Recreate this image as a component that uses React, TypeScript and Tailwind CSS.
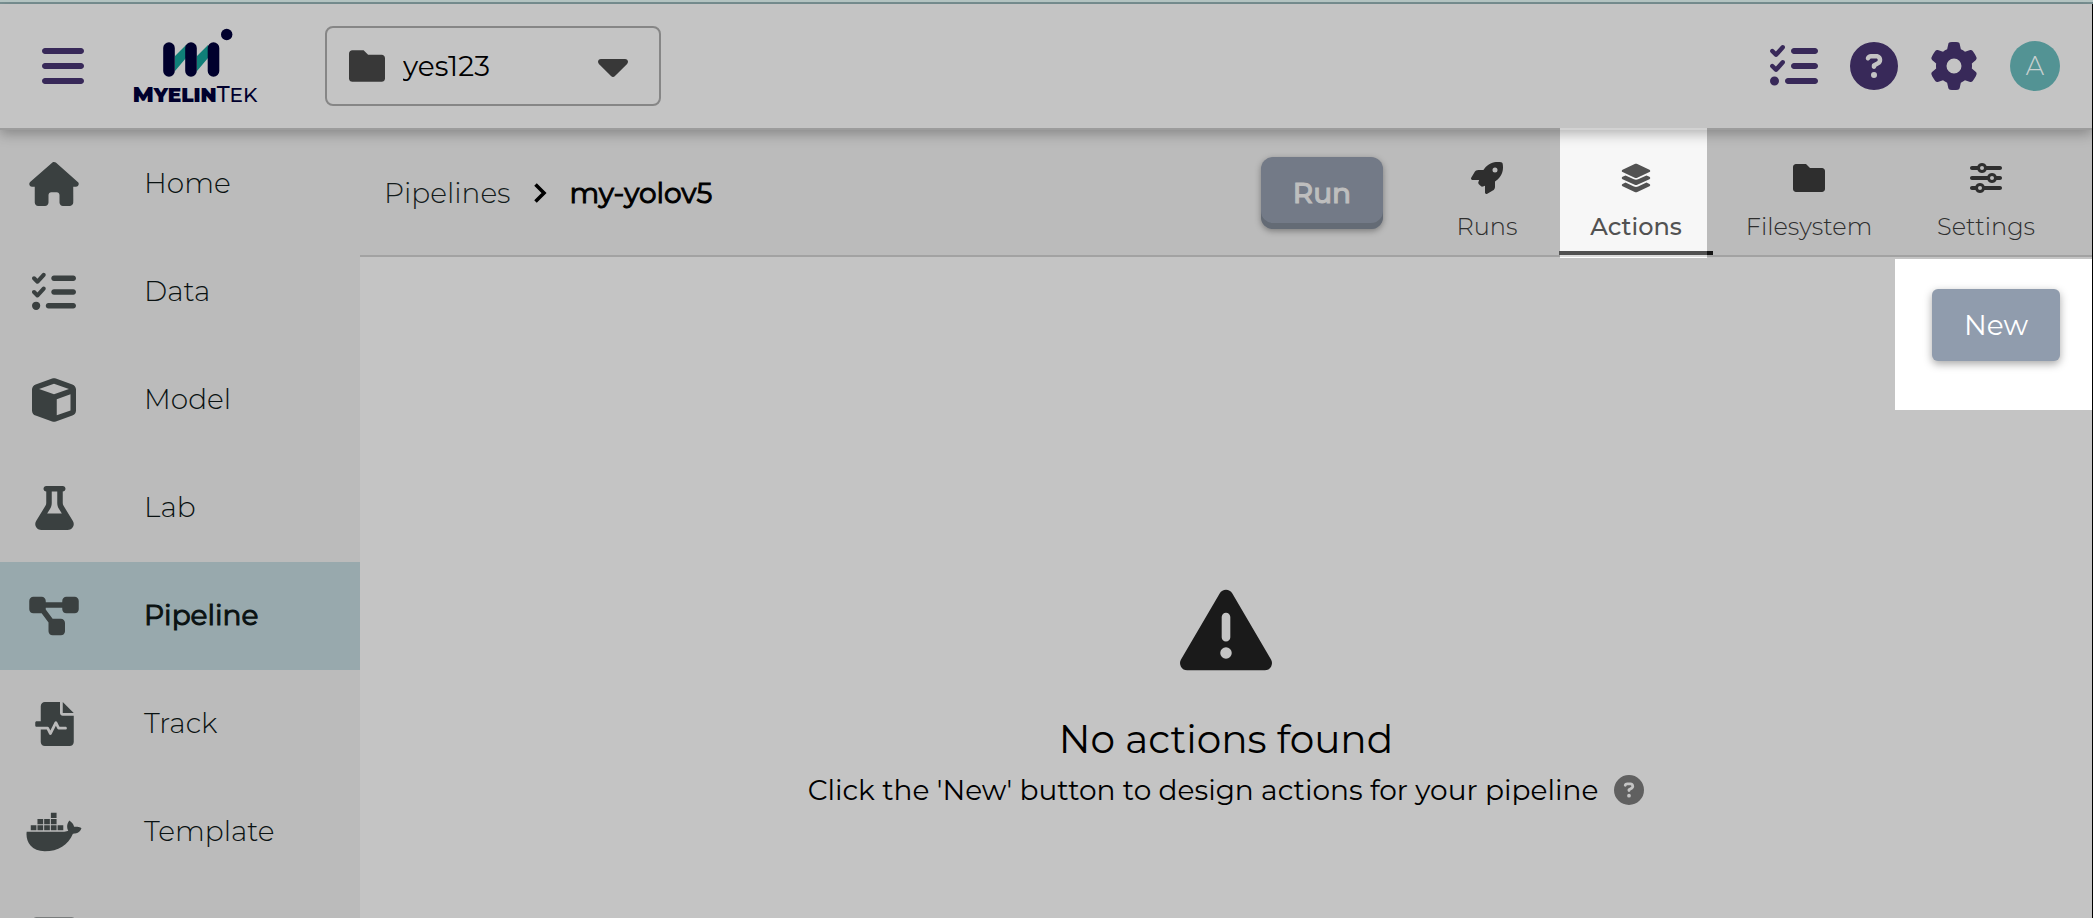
import type { ComponentType, ReactNode } from "react";
import {
  FaBars,
  FaCircleQuestion,
  FaCube,
  FaDiagramProject,
  FaDocker,
  FaFlask,
  FaGear,
  FaHouse,
  FaLayerGroup,
  FaListCheck,
  FaRocket,
  FaSliders,
  FaTriangleExclamation,
} from "react-icons/fa6";

type IconProps = { className?: string };
type Icon = ComponentType<IconProps>;

function FolderIcon({ className }: IconProps) {
  return (
    <svg viewBox="0 0 512 512" fill="currentColor" className={className} aria-hidden="true">
      <path d="M512 144v288c0 26.5-21.5 48-48 48H48c-26.5 0-48-21.5-48-48V80c0-26.5 21.5-48 48-48h160l64 64h192c26.5 0 48 21.5 48 48z" />
    </svg>
  );
}

function WaveformIcon({ className }: IconProps) {
  return (
    <svg viewBox="0 0 448 512" fill="currentColor" className={className} aria-hidden="true">
      <path d="M320 0v128h128L320 0zM288 128V0H112C85.5 0 64 21.5 64 48v176H16c-8.8 0-16 7.200-16 16v32c0 8.800 7.200 16 16 16h128c6.100 0 11.600 3.400 14.300 8.800L176 332.200l49.700-99.400c5.400-10.800 23.200-10.800 28.600 0L281.900 288H352c8.800 0 16 7.200 16 16s-7.200 16-16 16h-80c-6.100 0-11.600-3.400-14.300-8.800L240 275.800l-49.700 99.400c-2.700 5.400-8.200 8.800-14.300 8.800s-11.600-3.400-14.300-8.800L134.100 320H64v144c0 26.500 21.500 48 48 48h288c26.500 0 48-21.500 48-48V160H320c-17.700 0-32-14.300-32-32z" />
    </svg>
  );
}

function CaretIcon({ className }: IconProps) {
  return (
    <svg viewBox="0 0 30 18" fill="currentColor" className={className} aria-hidden="true">
      <path d="M3 0h24c2.700 0 4 3 2.100 4.900L17 17c-1.200 1.200-2.800 1.200-4 0L.900 4.900C-1 3 .300 0 3 0z" />
    </svg>
  );
}

function ChevronIcon({ className }: IconProps) {
  return (
    <svg viewBox="0 0 13 20" fill="none" stroke="currentColor" strokeWidth="3.600" className={className} aria-hidden="true">
      <path d="M1.500 1.500 10 10l-8.500 8.500" />
    </svg>
  );
}

function PanelIcon({ className }: IconProps) {
  return (
    <svg viewBox="0 0 44 46" fill="currentColor" className={className} aria-hidden="true">
      <rect y="0.500" width="44" height="45" rx="4" />
    </svg>
  );
}

function Logo() {
  return (
    <a href="#" className="flex w-[132px] flex-col items-center pt-1 text-[#00002d]" aria-label="MyelinTek">
      <svg viewBox="0 0 132 50" className="h-[50px] w-full" aria-hidden="true">
        <path d="M46 28 57 17v13L46 43zM68 28l11-11v13L68 43z" fill="#0f7f78" />
        <path d="M40 20v23M62 20v23M84.500 20v23" stroke="currentColor" strokeWidth="11.600" strokeLinecap="round" />
        <circle cx="97.700" cy="6.500" r="5.700" fill="currentColor" />
      </svg>
      <span className="mt-1 text-[20px] leading-[26px] whitespace-nowrap">
        <span className="font-black">
          <span className="text-[22px]">M</span>YELIN
        </span>
        <span className="font-medium">
          <span className="text-[22px]">T</span>EK
        </span>
      </span>
    </a>
  );
}

const navigation: { label?: string; icon: Icon; size: string; active?: boolean }[] = [
  { label: "Home", icon: FaHouse, size: "h-[44px] w-[50px]" },
  { label: "Data", icon: FaListCheck, size: "h-[44px] w-[44px]" },
  { label: "Model", icon: FaCube, size: "h-[44px] w-[44px]" },
  { label: "Lab", icon: FaFlask, size: "h-[44px] w-[39px]" },
  { label: "Pipeline", icon: FaDiagramProject, size: "h-[44px] w-[50px]", active: true },
  { label: "Track", icon: WaveformIcon, size: "h-[44px] w-[39px]" },
  { label: "Template", icon: FaDocker, size: "h-[44px] w-[56px]" },
  { icon: PanelIcon, size: "h-[46px] w-[44px]" },
];

function Sidebar() {
  return (
    <nav className="w-[360px] shrink-0 overflow-hidden">
      {navigation.map(({ label, icon: NavIcon, size, active }, index) => (
        <a
          key={index}
          href="#"
          className={
            active
              ? "flex h-[108px] items-center gap-9 bg-[#98a9ad] text-[28px] font-normal text-[#0a1212] [-webkit-text-stroke:1px_#0a1212]"
              : "flex h-[108px] items-center gap-9 text-[28px] font-light text-[#0a1212]"
          }
        >
          <span className="flex w-[108px] justify-center">
            <NavIcon className={`${size} text-[#3a4040]`} />
          </span>
          <span className="pb-[2px]">{label}</span>
        </a>
      ))}
    </nav>
  );
}

function HeaderButton({ label, children }: { label: string; children: ReactNode }) {
  return (
    <button type="button" aria-label={label} className="flex size-[48px] items-center justify-center text-[#382959]">
      {children}
    </button>
  );
}

function Header() {
  return (
    <header className="z-10 flex h-[126px] shrink-0 items-center border-b-2 border-[#9c9c9c] bg-[#c4c4c4] pr-8 pl-[42px] shadow-[0_4px_12px_rgba(0,0,0,0.28)]">
      <button type="button" aria-label="Menu" className="text-[#382959]">
        <FaBars className="h-[48px] w-[42px]" />
      </button>
      <div className="ml-[45px]">
        <Logo />
      </div>
      <label className="ml-16 flex h-[80px] w-[336px] items-center rounded-lg border-2 border-[#868686] pr-[31px] pl-[22px] text-[#383838]">
        <FolderIcon className="size-[36px] shrink-0" />
        <select aria-label="Project" className="ml-[18px] min-w-0 flex-1 appearance-none bg-transparent text-[28px] font-normal text-black outline-none">
          <option>yes123</option>
        </select>
        <CaretIcon className="mt-1 h-[18px] w-[30px] shrink-0" />
      </label>
      <div className="ml-auto flex items-center gap-8">
        <HeaderButton label="Tasks">
          <FaListCheck className="size-[48px]" />
        </HeaderButton>
        <HeaderButton label="Help">
          <FaCircleQuestion className="size-[48px]" />
        </HeaderButton>
        <HeaderButton label="Settings">
          <FaGear className="size-[48px]" />
        </HeaderButton>
        <button type="button" className="flex size-[50px] items-center justify-center rounded-full bg-[#539394] text-[26px] font-light text-[#c8d0d0]">
          A
        </button>
      </div>
    </header>
  );
}

const tabs: { label: string; icon: Icon; width: string; active?: boolean }[] = [
  { label: "Runs", icon: FaRocket, width: "w-[144px]" },
  { label: "Actions", icon: FaLayerGroup, width: "w-[154px]", active: true },
  { label: "Filesystem", icon: FolderIcon, width: "w-[192px]" },
  { label: "Settings", icon: FaSliders, width: "w-[162px]" },
];

function TabHighlightEdges() {
  return (
    <>
      <span className="absolute -top-[2px] left-px z-20 h-[2px] w-[147px] bg-[#d2d2d2]" />
      <span className="absolute right-0 -bottom-[4px] h-[4px] w-[6px] bg-[#161616]" />
      <span className="absolute -bottom-[7px] left-px h-[3px] w-[147px] border-b border-white bg-[#dcdcdc]" />
    </>
  );
}

function Toolbar() {
  return (
    <div className="flex h-[127px] shrink-0 items-center border-b-2 border-[#a2a2a2] pr-[25px] pl-6">
      <div className="flex items-center text-[28px]">
        <a href="#" className="font-light text-[#141c1c]">
          Pipelines
        </a>
        <ChevronIcon className="mx-[23px] h-[20px] w-[13px] text-black" />
        <span className="font-normal text-black [-webkit-text-stroke:1px_black]">my-yolov5</span>
      </div>
      <button
        type="button"
        className="mr-8 ml-auto h-[72px] w-[122px] rounded-xl bg-[#737a87] text-[28px] font-medium text-[#bebebe] shadow-[inset_0_-6px_0_#646b75,0_2px_6px_rgba(0,0,0,0.35)] [-webkit-text-stroke:1px_#bebebe]"
      >
        Run
      </button>
      <div role="tablist" className="flex self-stretch">
        {tabs.map(({ label, icon: TabIcon, width, active }) => (
          <button
            key={label}
            type="button"
            role="tab"
            aria-selected={Boolean(active)}
            className={`${width} ${
              active
                ? "relative border-b-4 border-[#525252] bg-[linear-gradient(to_right,#bbbbbb_1px,#f7f7f7_1px,#f7f7f7_148px,#bbbbbb_148px)] font-medium text-[#525252]"
                : "border-b-4 border-transparent font-light text-[#2e2e2e]"
            } flex flex-col items-center pt-8 text-[24px]`}
          >
            <TabIcon className="size-[32px]" />
            <span className="mt-[13px] leading-[40px]">{label}</span>
            {active && <TabHighlightEdges />}
          </button>
        ))}
      </div>
    </div>
  );
}

function EmptyState() {
  return (
    <section className="flex flex-1 flex-col items-center pt-[174px] text-black">
      <FaTriangleExclamation className="size-[92px] text-[#1a1a1a]" />
      <h1 className="mt-[35px] text-[39px] leading-[56px] font-normal">No actions found</h1>
      <p className="flex items-center gap-4 text-[28px] leading-[46px] font-normal">
        Click the 'New' button to design actions for your pipeline
        <FaCircleQuestion className="size-[30px] text-[#606060]" />
      </p>
    </section>
  );
}

export default function App() {
  return (
    <div className="flex h-screen flex-col overflow-hidden border-t-2 border-[#b3c3c1] bg-[#bbbbbb] font-['Montserrat','Inter',sans-serif]">
      <div className="flex min-h-0 flex-1 flex-col border-t-2 border-t-[#7b9395]">
        <div className="flex min-h-0 flex-1 flex-col border-r border-r-black">
          <Header />
          <div className="flex min-h-0 flex-1">
            <Sidebar />
            <main className="flex min-w-0 flex-1 flex-col">
              <Toolbar />
              <div className="flex flex-1 flex-col bg-[#c4c4c4] pt-[2px]">
                <div className="self-end bg-white pt-[30px] pr-8 pb-[49px] pl-[37px]">
                  <button
                    type="button"
                    className="block h-[72px] w-[128px] rounded-md bg-[#909cad] text-[28px] text-white shadow-[0_3px_8px_rgba(0,0,0,0.35)]"
                  >
                    New
                  </button>
                </div>
                <EmptyState />
              </div>
            </main>
          </div>
        </div>
      </div>
    </div>
  );
}
